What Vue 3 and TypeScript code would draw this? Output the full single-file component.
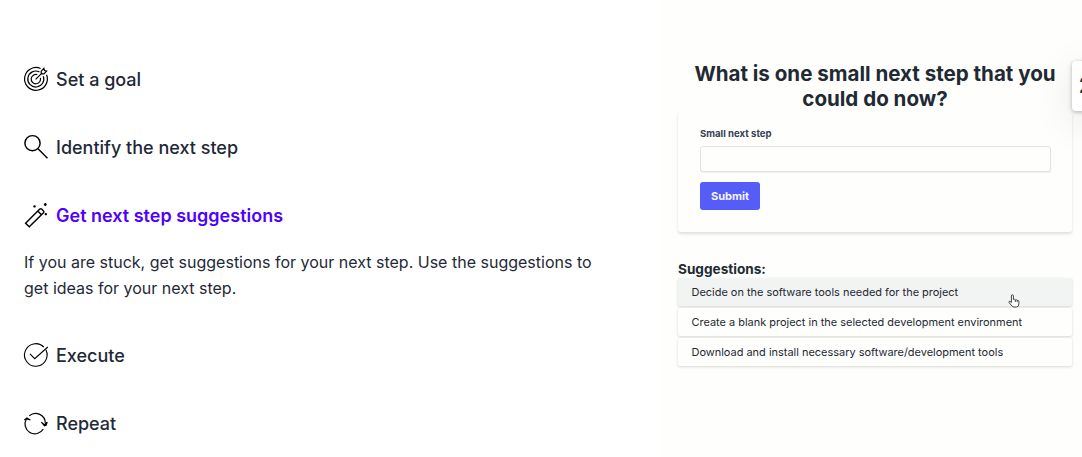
<script setup lang="ts">
import { ref } from 'vue';

interface Step {
  icon: string;
  title: string;
  text: string;
}

const steps: Step[] = [
  { icon: 'goal', title: 'Set a goal', text: '' },
  { icon: 'search', title: 'Identify the next step', text: '' },
  {
    icon: 'wand',
    title: 'Get next step suggestions',
    text: 'If you are stuck, get suggestions for your next step. Use the suggestions to get ideas for your next step.'
  },
  { icon: 'check', title: 'Execute', text: '' },
  { icon: 'repeat', title: 'Repeat', text: '' }
];

const suggestions: string[] = [
  'Decide on the software tools needed for the project',
  'Create a blank project in the selected development environment',
  'Download and install necessary software/development tools'
];

const active = ref<number>(2);
const nextStep = ref<string>('');
</script>

<template>
  <div class="main">
    <div class="steps">
      <div v-for="(step, index) in steps" :key="step.icon" class="step">
        <div class="step_title" :class="{ active: index === active }" @click="active = index">
          <svg class="icon" :class="step.icon" viewBox="0 0 24 24">
            <g v-if="step.icon === 'goal'">
              <path d="M16.6 1.5A11.4 11.4 0 1 0 22.6 7.8" />
              <path d="M15.4 4.9A8 8 0 1 0 19.3 9.2" />
              <path d="M13.3 7.6A4.7 4.7 0 1 0 16.4 10.8" />
              <path d="M11.6 12.4 18.2 5.8M17.2 6.8V4.2L19.9 1.5l.6 2 2.1.6-2.7 2.7h-2.7" />
            </g>
            <g v-else-if="step.icon === 'search'">
              <circle cx="8.5" cy="8.2" r="7.6" />
              <path d="M14 13.7 23.5 23.2" />
            </g>
            <g v-else-if="step.icon === 'wand'">
              <path d="M1.6 20.3 15.8 6.1q.9-.9 1.8 0l1.9 1.9q.9.9 0 1.8L5.3 23.7zM13.8 8.1l3.8 3.8" />
              <path d="M10.5 2.2v2.4M9.3 3.4h2.4M21.3.1v2.8M19.9 1.5h2.8M21.8 10.1v2.2M20.7 11.2h2.2" />
            </g>
            <g v-else-if="step.icon === 'check'">
              <path d="M22 7.1A11.3 11.3 0 1 1 19.8 4M22 7.1A11.3 11.3 0 0 1 23 12" />
              <path d="m6 10.8 4.7 4.9L23.8 4" />
            </g>
            <g v-else>
              <path d="M5.2 4.9A9.7 9.7 0 0 1 21.3 12.5M19.3 18A9.7 9.7 0 0 1 2.4 8" />
              <path class="filled" d="m17.4 11.2 3 2.7 2.8-2.8-1.1 3.1-1.6.5zM.2 9.1l2.6-2.2 3.5 2-3.2-1-1.6.1z" />
            </g>
          </svg>
          <span>{{ step.title }}</span>
        </div>
        <p v-if="index === active" class="step_text">{{ step.text }}</p>
      </div>
    </div>

    <div class="preview">
      <h2>What is one small next step that you could do now?</h2>
      <div class="form_box">
        <label for="next-step">Small next step</label>
        <input id="next-step" v-model="nextStep" type="text">
        <button>Submit</button>
      </div>
      <h3>Suggestions:</h3>
      <ul>
        <li v-for="(item, index) in suggestions" :key="index" :class="{ hovered: index === 0 }">{{ item }}</li>
      </ul>
      <svg class="cursor" viewBox="0 0 12 14">
        <path d="M3.4 8.6V2q0-1.2 1-1.2t1 1.2v3.5q1.4-.7 1.9.4 1.3-.6 1.8.5 1.8-.4 1.8 1.2v2.2q0 3.2-2.5 3.2H6q-1.3 0-2-1L1 8.5q-.3-1.5 1-1.2z" />
        <path d="M7.3 6v2M9.2 6.5v1.7" />
      </svg>
      <div class="tooltip">2</div>
    </div>
  </div>
</template>

<style>
body {
  margin: 0;
  background-color: white;
}
</style>

<style scoped>
.main {
  display: flex;
  justify-content: space-between;
  box-sizing: border-box;
  height: 457px;
  padding-left: 24px;
  overflow: hidden;
  font-family: Inter, sans-serif;
  color: #1f2937;
}
.steps {
  width: 584px;
  padding-top: 45px;
}
.step_title {
  display: flex;
  align-items: center;
  height: 28px;
  padding: 20px 0;
  font-size: 18px;
  font-weight: 500;
  cursor: pointer;
}
.step_title.active {
  color: #4f00ff;
  font-weight: 600;
}
.icon {
  width: 24px;
  height: 24px;
  margin-right: 8px;
  overflow: visible;
  fill: none;
  stroke: black;
  stroke-width: 1.2;
}
.search,
.wand {
  stroke-width: 1.45;
}
.check {
  stroke-width: 1.1;
}
.filled {
  fill: black;
}
.step_text {
  margin: 0;
  padding-bottom: 20px;
  font-size: 16px;
  line-height: 26px;
}
.preview {
  position: relative;
  box-sizing: border-box;
  width: 422px;
  padding: 62px 10px 0 18px;
  background-color: #fefefd;
  color: #1f2a33;
}
h2 {
  margin: 0 -10px;
  font-size: 20.55px;
  line-height: 24.5px;
  font-weight: 700;
  text-align: center;
}
.form_box {
  display: flex;
  flex-direction: column;
  align-items: flex-start;
  box-sizing: border-box;
  height: 121px;
  padding: 16.5px 21px 0 22px;
  border-radius: 3px;
  box-shadow: 0 2px 3px rgba(0, 0, 0, 0.12);
}
label {
  font-size: 9.6px;
  line-height: 12px;
  font-weight: 700;
  color: #374151;
}
input {
  box-sizing: border-box;
  width: 100%;
  height: 26.5px;
  margin: 6px 0 10px;
  border: 1px solid #e3e3e5;
  border-radius: 3px;
  background-color: #fefefd;
  box-shadow: 0 1px 1px rgba(0, 0, 0, 0.06);
}
button {
  width: 60px;
  height: 28px;
  padding: 0;
  border: none;
  border-radius: 3px;
  background-color: #555cf8;
  color: #f5f5ff;
  font-family: inherit;
  font-size: 11px;
  font-weight: 700;
}
h3 {
  margin: 29px 0 1px;
  font-size: 13.6px;
  line-height: 16px;
  font-weight: 700;
}
ul {
  display: flex;
  flex-direction: column;
  gap: 2px;
  margin: 0;
  padding: 0;
  list-style: none;
}
li {
  height: 28px;
  padding-left: 13.5px;
  font-size: 10.96px;
  line-height: 28px;
  white-space: nowrap;
  border-radius: 2px;
  background-color: #fefefd;
  box-shadow: 0 1px 3px rgba(0, 0, 0, 0.16);
}
li.hovered {
  background-color: #f2f3f3;
}
.cursor {
  position: absolute;
  left: 348px;
  top: 294px;
  width: 12px;
  height: 14px;
  fill: white;
  stroke: #444;
  stroke-width: 1;
}
.tooltip {
  position: absolute;
  left: 412px;
  top: 61px;
  width: 40px;
  height: 50px;
  padding-left: 7px;
  box-sizing: border-box;
  border-radius: 4px;
  background-color: white;
  box-shadow: 0 1px 4px rgba(0, 0, 0, 0.28), 0 10px 40px rgba(0, 0, 0, 0.1);
  font-size: 21px;
  line-height: 50px;
  font-weight: 700;
}
</style>
